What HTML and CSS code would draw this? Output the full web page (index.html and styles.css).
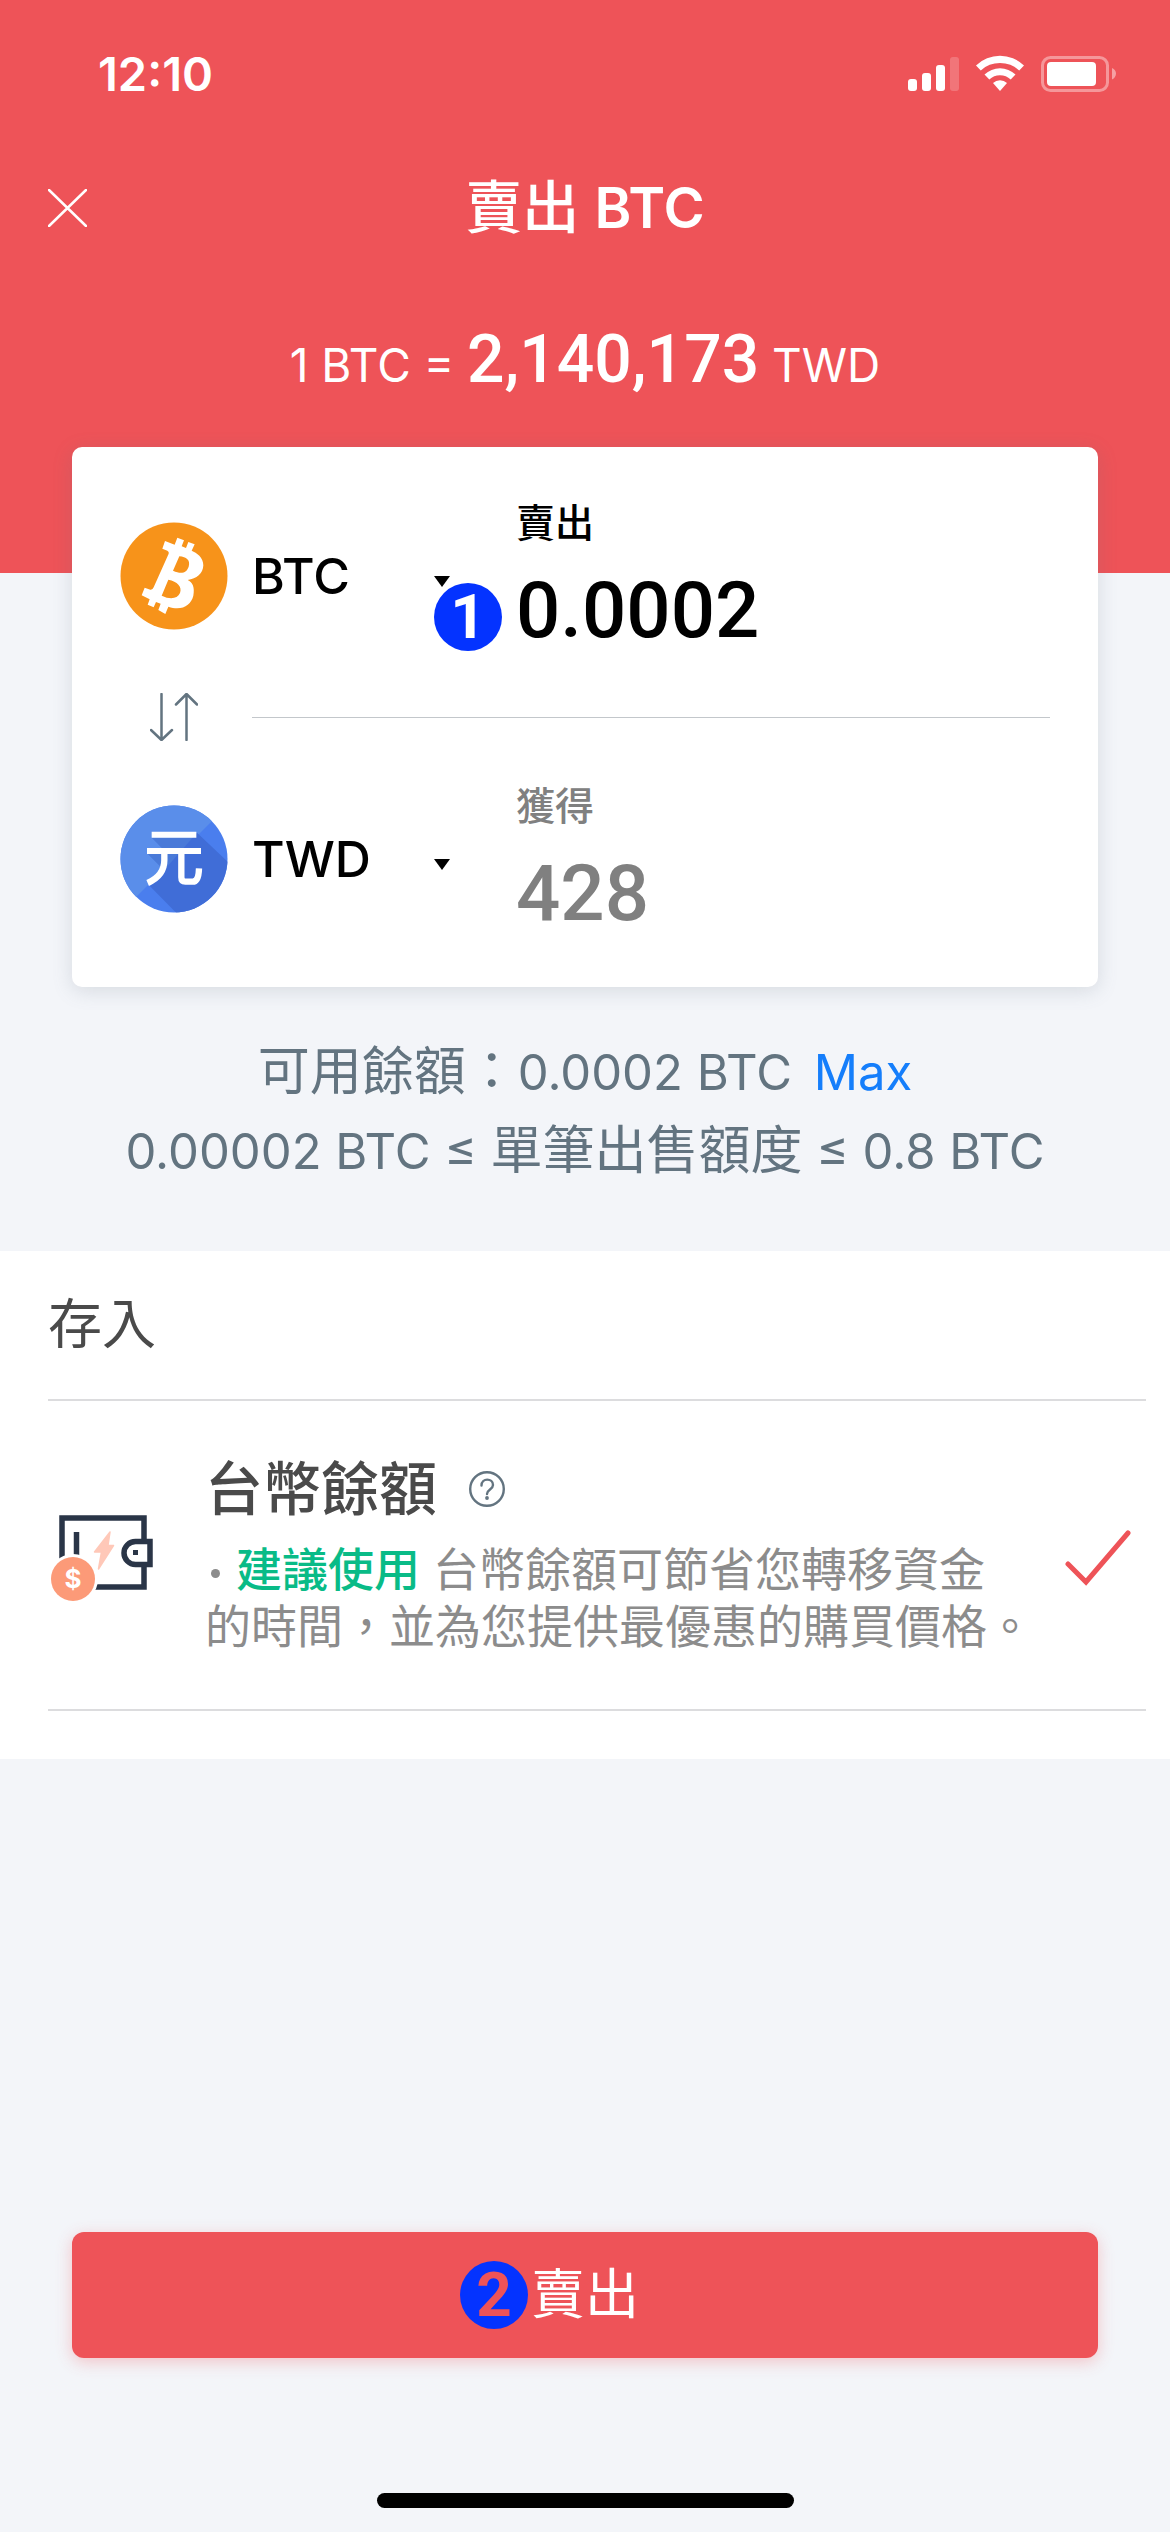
FILE: index.html
```html
<!DOCTYPE html>
<html lang="zh-Hant-TW">
<head>
<meta charset="utf-8">
<meta name="viewport" content="width=device-width, initial-scale=1">
<title>賣出 BTC</title>
<link rel="stylesheet" href="styles.css">
</head>
<body>
<div class="screen">
  <header class="header">
    <div class="status">
      <span class="status-time">12:10</span>
      <svg class="status-icons" viewBox="0 0 210 38" width="210" height="38" aria-hidden="true">
        <g fill="#fff">
          <rect x="0" y="24" width="9" height="12" rx="3"/>
          <rect x="14" y="18" width="9" height="18" rx="3"/>
          <rect x="28" y="10" width="9" height="26" rx="3"/>
          <rect x="42" y="2" width="9" height="34" rx="3" opacity=".2"/>
          <path d="M68 10.500a34.500 34.500 0 0 1 48 0l-4.800 5a28 28 0 0 0-38.400 0z"/>
          <path d="M76.500 19.500a22.500 22.500 0 0 1 31 0l-4.800 5a15.500 15.500 0 0 0-21.400 0z"/>
          <path d="M85 28a10.500 10.500 0 0 1 14 0l-7 8z"/>
          <rect x="139" y="7" width="49" height="24" rx="4"/>
          <path d="M204 13c2.500 1 4 3 4 5.500s-1.500 5-4 6z" opacity=".45"/>
        </g>
        <rect x="134.500" y="2.500" width="65" height="33" rx="8" fill="none" stroke="#fff" stroke-width="3" opacity=".4"/>
      </svg>
    </div>
    <div class="titlebar">
      <button class="close" type="button" aria-label="關閉">
        <svg viewBox="0 0 39 38" width="39" height="38"><path d="M1 1l37 36M38 1L1 37" fill="none" stroke="#fff" stroke-width="2.500" stroke-linecap="round"/></svg>
      </button>
      <h1 class="title">賣出 <span class="title-code">BTC</span></h1>
    </div>
    <p class="rate">1 BTC = <strong class="rate-value">2,140,173</strong> TWD</p>
  </header>

  <main class="main">
    <section class="card">
      <div class="row">
        <svg class="coin" viewBox="0 0 324 324" width="108" height="108" aria-hidden="true">
          <circle cx="162" cy="162" r="160.500" fill="#f7931a"/>
          <path transform="translate(-15 -20)" fill="#fff" fill-rule="evenodd" d="M150 77L142 100l15 6q6 3 4 9L116 216q-3 8-10 7L89 217 80 240l24 12-6 16 18 8 7-16 14 5-7 19 21 12 9-22C200 288 228 270 235 241c5-25-2-40-17-47 27-4 46-18 47-44 0-25-20-37-35-44l9-19-19-7-7 18-13-5 7-18-20-8-8 21zM193 123l-19 43c26 12 41 6 47-12 6-20-7-29-28-31zM160 193l-20 48c25 12 47 10 55-8 7-20-8-34-35-40z"/>
        </svg>
        <label class="currency">
          <select class="currency-select" aria-label="賣出幣別"><option>BTC</option></select>
          <svg class="caret" viewBox="0 0 16 11" width="16" height="11" aria-hidden="true"><path d="M0 0h16l-8 11z"/></svg>
        </label>
        <div class="amount">
          <label class="amount-label" for="sell">賣出</label>
          <input class="amount-input" id="sell" type="text" inputmode="decimal" value="0.0002">
          <span class="badge badge-amount">1</span>
        </div>
      </div>
      <div class="swap-row">
        <button class="swap" type="button" aria-label="交換">
          <svg viewBox="0 0 48 48" width="48" height="48"><path d="M11.500 1v46M1 37l10.500 10L22 37M36.500 47V1M26 11.500L36.500 1 47 11.500" fill="none" stroke="#637480" stroke-width="2.500" stroke-linecap="round" stroke-linejoin="round"/></svg>
        </button>
        <hr class="rule">
      </div>
      <div class="row">
        <svg class="coin" viewBox="0 0 324 324" width="108" height="108" aria-hidden="true">
          <defs><clipPath id="disc"><circle cx="162" cy="162" r="160.500"/></clipPath></defs>
          <g clip-path="url(#disc)">
            <path fill="#4a7eee" d="M0 0h324v324H0z"/>
            <path fill="#5a8eea" d="M0 0h324L0 324z"/>
            <g transform="translate(-15 -18)">
              <path fill="#4a7ad8" d="M110 116h130v30L160 205h-22L96 163h60z"/>
              <path fill="#406dd7" d="M246 101l100 95v150H188l-83-84z"/>
            </g>
          </g>
          <g transform="translate(-15 -18)">
            <path fill="none" stroke="#fff" stroke-width="18" d="M110 107h134M96 156h162"/>
            <path fill="none" stroke="#fff" stroke-width="19" d="M148 160v24c0 32-18 54-50 68M199 160v75q0 13 12 13h22q18 0 19-40"/>
          </g>
        </svg>
        <label class="currency">
          <select class="currency-select" aria-label="獲得幣別"><option>TWD</option></select>
          <svg class="caret" viewBox="0 0 16 11" width="16" height="11" aria-hidden="true"><path d="M0 0h16l-8 11z"/></svg>
        </label>
        <div class="amount amount-muted">
          <label class="amount-label" for="get">獲得</label>
          <input class="amount-input" id="get" type="text" inputmode="decimal" value="428">
        </div>
      </div>
    </section>

    <div class="limits">
      <p class="limit"><span class="han">可用餘額：</span>0.0002 BTC <a class="max" href="#">Max</a></p>
      <p class="limit">0.00002 BTC ≤ <span class="han">單筆出售額度</span> ≤ 0.8 BTC</p>
    </div>

    <section class="deposit">
      <h2 class="deposit-title">存入</h2>
      <div class="method">
        <svg class="wallet" viewBox="0 0 104 86" width="104" height="86" aria-hidden="true">
          <path fill="none" stroke="#2a3547" stroke-width="5.500" d="M12 50V3h82v22M94 50v22H40"/>
          <path fill="none" stroke="#2a3547" stroke-width="5.500" d="M26.500 17v25"/>
          <path fill="none" stroke="#2a3547" stroke-width="5.500" d="M100 26.500v23H85.500a11.500 11.500 0 0 1 0-23z"/>
          <path fill="#2a3547" d="M83 35h5v5h-5z"/>
          <path fill="#ffc8b8" stroke="#ffc8b8" stroke-width="1.500" stroke-linejoin="round" d="M60 17L44.500 37h7L48.500 54 63.500 30.500h-5.500z"/>
          <circle cx="23" cy="64" r="25" fill="#fff"/>
          <circle cx="23" cy="64" r="22" fill="#fc9a78"/>
          <text class="wallet-sign" x="23" y="73" text-anchor="middle">$</text>
        </svg>
        <div class="method-body">
          <h3 class="method-title">台幣餘額
            <button class="help" type="button" aria-label="說明">
              <svg viewBox="0 0 36 36" width="36" height="36"><circle cx="18" cy="18" r="16.800" fill="none" stroke="#637480" stroke-width="2.400"/><path d="M12.500 14.500c0-8 11.500-7.500 11.500-.5 0 4.500-6 4.500-6 9" fill="none" stroke="#637480" stroke-width="2.400" stroke-linecap="round"/><circle cx="18" cy="27" r="1.900" fill="#637480"/></svg>
            </button>
          </h3>
          <p class="method-text"><span class="bullet"></span><strong class="tip">建議使用</strong> 台幣餘額可節省您轉移資金<br>的時間，並為您提供最優惠的購買價格。</p>
        </div>
        <svg class="check" viewBox="0 0 66 56" width="66" height="56" aria-hidden="true"><path d="M3 34l18 18L63 3" fill="none" stroke="#ee5358" stroke-width="5" stroke-linecap="round"/></svg>
      </div>
    </section>
  </main>

  <footer class="footer">
    <button class="submit" type="button"><span class="submit-label">賣出<span class="badge badge-submit">2</span></span></button>
    <div class="home"></div>
  </footer>
</div>
</body>
</html>
```

FILE: styles.css
```css
*,
*::before,
*::after {
  box-sizing: border-box;
}

body {
  margin: 0;
  background: #f3f5f9;
  font-family: Inter, "Noto Sans CJK TC", sans-serif;
  color: #000;
}

h1, h2, h3, p {
  margin: 0;
}

button, input, select {
  padding: 0;
  border: 0;
  background: none;
  color: inherit;
  font: inherit;
}

svg {
  display: block;
  flex: none;
}

.screen {
  display: flex;
  flex-direction: column;
  min-height: 100vh;
}

.header {
  padding-bottom: 168px;
  background: #ee5358;
  color: #fff;
}

.status {
  display: flex;
  align-items: center;
  justify-content: space-between;
  padding: 44px 52px 0 98px;
}

.status-time {
  font-size: 47px;
  font-weight: 600;
  line-height: 60px;
}

.titlebar {
  display: grid;
  grid-template-columns: 1fr auto 1fr;
  align-items: center;
  height: 120px;
  margin-top: 44px;
  padding: 0 48px;
}

.close {
  justify-self: start;
}

.title {
  font-size: 57px;
  font-weight: 500;
  line-height: 80px;
}

.title-code {
  font-size: 56px;
  font-weight: 600;
}

.rate {
  margin-top: 52px;
  font-size: 46px;
  line-height: 80px;
  text-align: center;
}

.rate-value {
  font-family: Roboto, sans-serif;
  font-size: 66px;
  font-weight: 500;
}

.main {
  flex: 1;
}

.card {
  position: relative;
  display: grid;
  gap: 40px;
  margin: -126px 72px 0;
  padding: 51px 48px;
  border-radius: 10px;
  background: #fff;
  box-shadow: 0 4px 20px rgba(99, 116, 128, 0.2);
}

.row {
  display: flex;
  align-items: center;
  height: 155px;
}

.currency {
  display: flex;
  align-items: center;
  width: 198px;
  margin-left: 24px;
}

.currency-select {
  flex: 1;
  min-width: 0;
  appearance: none;
  font-size: 50px;
  font-weight: 500;
  line-height: 60px;
}

.caret {
  margin-top: 12px;
}

.amount {
  position: relative;
  display: flex;
  flex: 1;
  flex-direction: column;
  min-width: 0;
  margin-left: 66px;
}

.amount-label {
  font-size: 39px;
  font-weight: 500;
  line-height: 50px;
}

.amount-input {
  width: 100%;
  height: 85px;
  margin-top: 20px;
  font-family: Roboto, sans-serif;
  font-size: 78px;
  font-weight: 500;
}

.amount-muted {
  color: #808080;
}

.badge {
  position: absolute;
  display: grid;
  place-items: center;
  width: 68px;
  height: 68px;
  border-radius: 50%;
  background: #0433ff;
  font-family: Roboto, sans-serif;
  font-size: 62px;
  font-weight: 700;
  line-height: 68px;
}

.badge-amount {
  top: 85px;
  left: -82px;
  color: #fff;
}

.badge-submit {
  top: 6px;
  left: -71px;
  color: #ee5358;
}

.swap-row {
  display: flex;
  align-items: center;
  gap: 54px;
  padding-left: 30px;
}

.rule {
  flex: 1;
  margin: 0;
  border: 0;
  border-top: 1px solid #c3c7cb;
}

.limits {
  padding: 46px 24px 60px;
  color: #637480;
  text-align: center;
}

.limit {
  font-size: 49px;
  line-height: 78px;
}

.han {
  font-size: 52px;
}

.max {
  margin-left: 8px;
  color: #157efb;
  text-decoration: none;
}

.deposit {
  padding: 0 24px 48px 48px;
  background: #fff;
}

.deposit-title {
  border-bottom: 2px solid #dcdcde;
  color: #4a4a4a;
  font-size: 54px;
  font-weight: 400;
  line-height: 148px;
}

.method {
  display: flex;
  align-items: center;
  padding: 48px 15px 42px 2px;
  border-bottom: 2px solid #dcdcde;
}

.method-body {
  flex: 1;
  margin-left: 51px;
  margin-right: 24px;
}

.method-title {
  display: flex;
  align-items: center;
  gap: 32px;
  color: #4a4a4a;
  font-size: 58px;
  font-weight: 500;
  line-height: 80px;
}

.method-text {
  padding: 12px 0;
  color: #8c8c8c;
  font-size: 46px;
  line-height: 57px;
}

.bullet {
  display: inline-block;
  width: 9px;
  height: 9px;
  margin: 0 16px 8px 6px;
  border-radius: 50%;
  background: #8c8c8c;
}

.tip {
  color: #09bb87;
  font-weight: 500;
}

.wallet-sign {
  fill: #fff;
  font-family: Inter, sans-serif;
  font-size: 26px;
  font-weight: 700;
}

.footer {
  display: flex;
  flex-direction: column;
  gap: 135px;
  padding: 0 72px 24px;
}

.submit {
  height: 126px;
  border-radius: 12px;
  background: #ee5358;
  box-shadow: 0 4px 16px rgba(238, 83, 88, 0.3);
  color: #fff;
  font-size: 54px;
  line-height: 80px;
}

.submit-label {
  position: relative;
  display: inline-block;
}

.home {
  align-self: center;
  width: 417px;
  height: 15px;
  border-radius: 8px;
  background: #000;
}
```
